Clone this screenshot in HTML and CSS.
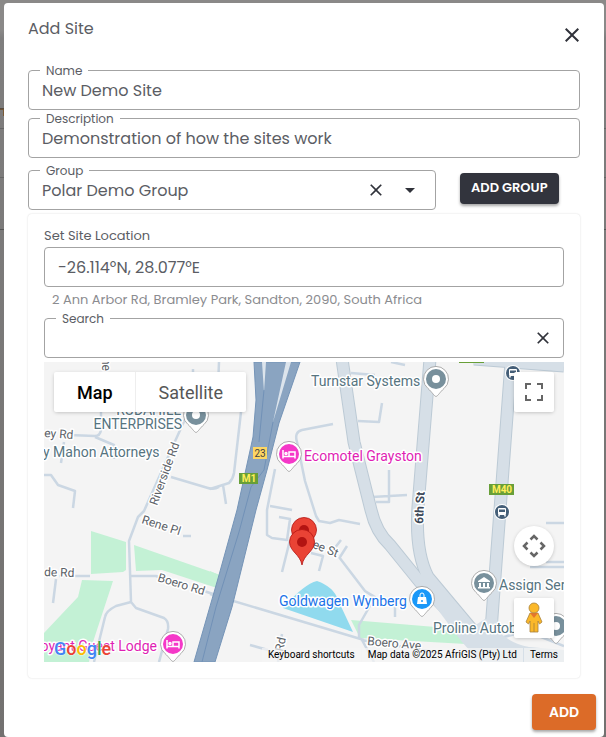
FILE: index.html
```html
<!DOCTYPE html>
<html lang="en">
<head>
<meta charset="utf-8">
<title>Add Site</title>
<link rel="stylesheet" href="styles.css">
</head>
<body>
<main class="dialog" role="dialog" aria-labelledby="dialog-title">
  <header class="dialog-header">
    <h1 class="dialog-title" id="dialog-title">Add Site</h1>
    <button class="icon-button close" type="button" aria-label="Close">
      <svg width="24" height="24" viewBox="0 0 24 24"><path d="M19 6.41 17.59 5 12 10.59 6.41 5 5 6.41 10.59 12 5 17.59 6.41 19 12 13.41 17.59 19 19 17.59 13.41 12z"/></svg>
    </button>
  </header>
  <form class="form">
    <div class="field">
      <label class="field-label" for="name">Name</label>
      <input class="field-input" id="name" type="text" value="New Demo Site">
    </div>
    <div class="field">
      <label class="field-label" for="description">Description</label>
      <input class="field-input" id="description" type="text" value="Demonstration of how the sites work">
    </div>
    <div class="group-row">
      <div class="field group-field">
        <label class="field-label" for="group">Group</label>
        <select class="field-input" id="group"><option>Polar Demo Group</option></select>
        <button class="icon-button" type="button" aria-label="Clear group">
          <svg width="20" height="20" viewBox="0 0 24 24"><path d="M19 6.41 17.59 5 12 10.59 6.41 5 5 6.41 10.59 12 5 17.59 6.41 19 12 13.41 17.59 19 19 17.59 13.41 12z"/></svg>
        </button>
        <svg class="arrow" width="24" height="24" viewBox="0 0 24 24" aria-hidden="true"><path d="m7 10 5 5 5-5z"/></svg>
      </div>
      <button class="button button-dark" type="button">ADD GROUP</button>
    </div>
    <section class="card">
      <label class="card-label" for="location">Set Site Location</label>
      <div class="field">
        <input class="field-input coordinates" id="location" type="text" value="-26.114°N, 28.077°E">
      </div>
      <p class="hint">2 Ann Arbor Rd, Bramley Park, Sandton, 2090, South Africa</p>
      <div class="field search-field">
        <label class="field-label" for="search">Search</label>
        <input class="field-input" id="search" type="text">
        <button class="icon-button" type="button" aria-label="Clear search">
          <svg width="20" height="20" viewBox="0 0 24 24"><path d="M19 6.41 17.59 5 12 10.59 6.41 5 5 6.41 10.59 12 5 17.59 6.41 19 12 13.41 17.59 19 19 17.59 13.41 12z"/></svg>
        </button>
      </div>
      <div class="map">
        <svg class="map-canvas" viewBox="0 0 520 300" preserveAspectRatio="xMidYMid slice" role="img" aria-label="Map of Bramley Park">
          <defs>
            <g id="pin">
              <path class="pin-edge" d="M0 17.500C-2 17-4 13-8 9.500A12.500 12.500 0 1 1 8 9.500C4 13 2 17 0 17.500z"/>
            </g>
            <g id="marker">
              <path d="M0 23C-2 12-12 10-12.500 0A12.500 12.500 0 0 1 12.500 0C12 10 2 12 0 23z" fill="#ea4335" stroke="#b31412" stroke-width=".8"/>
              <circle r="5" fill="#b31412"/>
            </g>
            <g id="bed" fill="none" stroke="#fff" stroke-width="1.500">
              <path d="M-6-4V4.500M-6 2.500H6M6 4.500V-2H0V2"/><circle cx="-3" cy="-.5" r="1"/>
            </g>
            <g id="bus">
              <circle r="8" fill="#fff"/><circle r="7" fill="#455f78"/>
              <rect x="-4" y="-4" width="8" height="7" rx="1" fill="#fff"/>
              <path d="M-3-2.500H3V0H-3z" fill="#455f78"/><path d="M-3 3v1.500M3 3v1.500" stroke="#fff" stroke-width="1.500"/>
            </g>
          </defs>
          <rect width="520" height="300" fill="#f4f4f4"/>
          <g fill="#c3f1d5">
            <path d="M47 169 82 180V208L79 210 47 212z"/>
            <path d="M90 183 176 213V227L118 208 92 209z"/>
            <path d="M38 218 69 219 49 280 45 300H0V271L16 254 34 235z"/>
            <path d="M166 209 175 213V226L166 222z"/>
            <path d="M307 258 416 267 422 282 316 276z"/>
          </g>
          <path d="M239 246Q260 222 273 219Q290 225 294 238L309 270z" fill="#90daee"/>
          <g class="street">
            <path d="M61 0V45"/><path d="M57 50V68Q56 74 51 74L25 73"/><path d="M51 75 70 83V97M20 80 17 101M0 113H7L14 123 31 129 29 146"/>
            <path d="M149 7V20M175 0 173 50M147 44 128 86 100 149 94 155 85 179 87 240 92 246 120 256Q125 259 124 267L115 300"/>
            <path d="M127 115 164 126Q170 128 175 125M87 240 72 244Q62 249 61 255L50 300"/>
            <path d="M15 214H46M12 217 9 241M87 214H112L122 218M160 229 172 233M139 174H147"/>
            <path d="M197 50 190 111Q189 117 185 121L166 127M179 123 182 142"/>
            <path d="M289 62 258 68Q250 70 253 80L261 119 272 154 275 159 286 161 295 158 316 162"/>
            <path d="M231 107 223 148V173L228 176 243 178 246 157 235 155M226 144 248 148 M246 178 238 210M267 191 279 194 275 209M295 195 321 229 330 235M321 229 331 235 315 263V277M290 187 297 178M296 195 303 184"/>
            <path d="M307 11 331 13M314 59 335 60 338 41M328 135 363 133M345 108V140H332"/>
            <path d="M166 232 320 278M206 283 224 288M238 272 234 300M318 278 330 300M317 278 390 290"/>
            <path d="M502 161H520M502 200H520M486 205H520M351 243V255M460 275 482 269 520 284M347 0 361 3"/>
          </g>
          <g class="road-edge"><path d="M430-3 520 4"/><path d="M298-3 310 80 327 148Q332 170 346 183L376 220 430 276 446 302"/><path d="M386-3 374 145Q371 190 384 215L430 270"/><path d="M467 0 456 148 447 268"/></g>
          <g class="road"><path d="M430-3 520 4"/><path d="M298-3 310 80 327 148Q332 170 346 183L376 220 430 276 446 302"/><path d="M386-3 374 145Q371 190 384 215L430 270"/><path d="M467 0 456 148 447 268"/></g>
          <path d="M378 213 390 220 430 264 441 257 453 256 455 270Q468 282 485 285L520 288V300H436L418 280 370 216z" fill="#d6dfe7"/>
          <path d="M210 0H256L235 61 223 108 212 148 193 225 188 245 171 300H150L175 213 193 148 209 75 212 38z" fill="#8aa4c1" stroke="#7594b7"/>
          <path d="M218 0H222L220 30zM242 0H247L229 60z" fill="#dce4ec"/>
          <path d="M220 28 215 80M229 60 220 108 207 125 195 170 172 245 158 300" fill="none" stroke="#7191b7"/>
          <path d="M415 0H440V1H415z" fill="#689f38"/>
          <g class="map-text">
            <text x="58" y="-4" transform="rotate(90 58 -4)" class="small">he</text>
            <text x="0" y="75" transform="rotate(4 0 75)" class="small">ey Rd</text>
            <text x="137" y="53" text-anchor="end" class="poi">RUDAHILL</text><text x="138" y="67" text-anchor="end" class="poi">ENTERPRISES</text>
            <text x="-1" y="95" class="poi">y Mahon Attorneys</text>
            <text x="113" y="144" transform="rotate(-70 113 144)" class="small">Riverside Rd</text>
            <text x="97" y="161" transform="rotate(18 97 161)" class="small">Rene Pl</text>
            <text x="113" y="219" transform="rotate(17 113 219)" class="small">Boero Rd</text>
            <text x="0" y="214" transform="rotate(2 0 214)" class="small">de Rd</text>
            <text x="264" y="184" transform="rotate(22 264 184)" class="small">ree St</text>
            <text x="239" y="290" transform="rotate(-78 239 290)" class="small">Rd</text>
            <text x="323" y="283" transform="rotate(5 323 283)" class="small">Boero Ave</text>
            <text x="379" y="162" transform="rotate(-87 379 162)" class="major">6th St</text>
            <text x="267" y="24" class="poi">Turnstar Systems</text>
            <text x="260" y="99" class="hotel">Ecomotel Grayston</text>
            <text x="235" y="244" class="shop">Goldwagen Wynberg</text>
            <text x="455" y="228" class="poi">Assign Ser</text>
            <text x="389" y="271" class="poi">Proline Autob</text>
            <text x="113" y="289" text-anchor="end" class="hotel">oyant Guest Lodge</text>
          </g>
          <g class="shields">
            <rect x="209" y="85" width="14" height="12" fill="#fdd663"/><text x="216" y="95" text-anchor="middle" fill="#424242">23</text>
            <rect x="195" y="111" width="19" height="11" fill="#689f38"/><text x="205" y="120" text-anchor="middle" class="shield-bold">M1</text>
            <rect x="445" y="122" width="25" height="11" fill="#689f38"/><text x="458" y="131" text-anchor="middle" class="shield-bold">M40</text>
          </g>
          <use href="#bus" x="469" y="11"/><use href="#bus" x="458" y="150"/>
          <g transform="translate(392 17)"><use href="#pin"/><circle r="10" fill="#78909c"/><circle r="4" fill="#fff"/></g>
          <g transform="translate(152 53)"><use href="#pin"/><circle r="10" fill="#78909c"/><circle r="4" fill="#fff"/></g>
          <g transform="translate(512 264)"><use href="#pin"/><circle r="10" fill="#78909c"/><circle r="4" fill="#fff"/></g>
          <g transform="translate(245 92)"><use href="#pin"/><circle r="10" fill="#f538c8"/><use href="#bed"/></g>
          <g transform="translate(129 282)"><use href="#pin"/><circle r="10" fill="#f538c8"/><use href="#bed"/></g>
          <g transform="translate(378 237)"><use href="#pin"/><circle r="10" fill="#1a98f8"/><path d="M-4-2H4L5 5H-5z" fill="#fff"/><path d="M-2-2v-2a2 2 0 0 1 4 0v2" fill="none" stroke="#fff"/><circle cy="2" r="1" fill="#1a98f8"/></g>
          <g transform="translate(440 221)"><use href="#pin"/><circle r="10" fill="#78909c"/><path d="M-6-2 0-6 6-2V-1H-6zM-5 0h2v4h-2zM-1 0H1V4H-1zM3 0H5V4H3zM-6 4H6V5.500H-6z" fill="#fff"/></g>
          <use href="#marker" x="260" y="168"/><use href="#marker" x="258" y="180"/>
        </svg>
        <div class="map-types"><button class="map-type selected" type="button">Map</button><button class="map-type" type="button">Satellite</button></div>
        <div class="map-tools">
          <button class="map-tool" type="button" aria-label="Toggle fullscreen"><svg width="18" height="18" viewBox="0 0 18 18"><path d="M0 0H6V2H2V6H0zM12 0H18V6H16V2H12zM0 12H2V16H6V18H0zM16 12H18V18H12V16H16z"/></svg></button>
          <button class="map-tool round" type="button" aria-label="Map camera controls"><svg width="24" height="24" viewBox="0 0 24 24" fill="none" stroke="#666" stroke-width="2.500"><path d="M8.500 5.500 12 2 15.500 5.500M8.500 18.500 12 22 15.500 18.500M5.500 8.500 2 12 5.500 15.500M18.500 8.500 22 12 18.500 15.500"/></svg></button>
          <button class="map-tool" type="button" aria-label="Street View"><svg width="20" height="32" viewBox="0 0 20 32" stroke="#a8813c" stroke-width=".8"><path d="M6 11H14L18 20 15.500 22 14 19V30H6V19L4.500 22 2 20z" fill="#fbb829"/><path d="M6 11H14L10 16z" fill="#e5762d" stroke="none"/><path d="M10 21V30"/><circle cx="10" cy="6" r="5" fill="#fbb829"/></svg></button>
        </div>
        <div class="map-footer">
          <a class="google" href="#" aria-label="Google"><span class="g-blue">G</span><span class="g-red">o</span><span class="g-yellow">o</span><span class="g-blue">g</span><span class="g-green">l</span><span class="g-red">e</span></a>
          <div class="credits"><button type="button">Keyboard shortcuts</button><span>Map data ©2025 AfriGIS (Pty) Ltd</span><a href="#">Terms</a></div>
        </div>
      </div>
    </section>
    <footer class="actions"><button class="button button-orange" type="submit">ADD</button></footer>
  </form>
</main>
</body>
</html>
```
FILE: styles.css
```css
* { box-sizing: border-box; }
body {
  margin: 0;
  padding: 3px 2px 0 4px;
  min-height: 100vh;
  background:
    linear-gradient(#4d4742, #7a5a35) 0 108px / 4px 2px no-repeat,
    linear-gradient(#7a5a35, #7a5a35) 3px 110px / 1px 6px no-repeat,
    linear-gradient(#666, #666) 0 128px / 100% 1px no-repeat,
    linear-gradient(#666, #666) 0 177px / 100% 1px no-repeat,
    linear-gradient(#555, #555) 0 229px / 100% 1px no-repeat,
    linear-gradient(#8a8988 0, #8a8988 30px, #7f7e7e 38px, #737170 100%);
  font-family: Poppins, Inter, sans-serif;
  color: #5b5d64;
}
button, input, select { font: inherit; color: inherit; }
button { border: 0; padding: 0; background: none; cursor: pointer; }
.dialog { min-height: calc(100vh - 3px); background: #fff; border-radius: 4px; }
.dialog-header { display: flex; justify-content: space-between; padding: 14px 20px 0 24px; height: 67px; }
.dialog-title { margin: 0; font-size: 16px; line-height: 24px; font-weight: 400; }
.icon-button { display: flex; align-items: center; justify-content: center; width: 24px; height: 24px; fill: #30323a; }
.close { margin-top: 6px; }
.form { display: flex; flex-direction: column; }
.field { position: relative; display: flex; align-items: center; height: 40px; margin: 0 24px 8px; border: 1px solid #a3a3a3; border-radius: 4px; }
.field-label { position: absolute; top: -8px; left: 11px; padding: 0 6px; background: #fff; font-size: 12px; line-height: 16px; }
.field-input { flex: 1; min-width: 0; height: 38px; padding: 0 13px; border: 0; outline: 0; background: none; appearance: none; font-size: 16px; }
.group-row { display: flex; align-items: center; gap: 24px; margin: 4px 24px; }
.group-row .field { margin: 0; }
.group-field { flex: 0 1 408px; padding-right: 13px; }
.arrow { margin-left: 10px; fill: #30323a; pointer-events: none; }
.button { border-radius: 4px; color: #fff; font-weight: 600; font-size: 13px; box-shadow: 0 2px 3px rgba(0, 0, 0, .35); }
.button-dark { height: 31px; padding: 0 11px; margin-bottom: 4px; background: #32343d; }
.button-orange { min-width: 64px; height: 36px; padding: 0 16px; background: #dc6b28; font-size: 14px; }
.card { margin: 0 24px; padding: 12px 16px 16px; border-radius: 4px; box-shadow: 0 0 2px rgba(0, 0, 0, .16); }
.card .field { margin: 0; }
.card-label { display: block; font-size: 13px; line-height: 20px; margin-bottom: 1px; }
.hint { margin: 3px 8px 8px; font-size: 13px; line-height: 20px; color: #8b8c90; }
.search-field { padding-right: 8px; }
.map { position: relative; height: 300px; margin-top: 4px; overflow: hidden; font-family: Roboto, sans-serif; }
.map-canvas { display: block; width: 100%; height: 100%; }
.street { fill: none; stroke: #cbd7e3; stroke-width: 2.5; stroke-linejoin: round; }
.road-edge { fill: none; stroke: #bccad5; stroke-width: 13; }
.road { fill: none; stroke: #d6dfe7; stroke-width: 11; }
.pin-edge { fill: #fff; stroke: #999; stroke-width: .8; }
.map-text text { paint-order: stroke; stroke: #fff; stroke-width: 3px; stroke-linejoin: round; font-size: 14px; }
.map-text .small { font-size: 12px; fill: #5c6268; }
.map-text .poi { fill: #56747f; }
.map-text .hotel { fill: #e01eb4; }
.map-text .shop { fill: #1a73e8; }
.map-text .major { font-size: 12px; font-weight: 700; fill: #3c4858; }
.shields { font-size: 10px; }
.shield-bold { font-weight: 700; fill: #ffee58; }
.map-types { position: absolute; top: 10px; left: 10px; display: flex; height: 40px; background: #fff; border-radius: 2px; box-shadow: 0 1px 4px -1px rgba(0, 0, 0, .3); }
.map-type { padding: 0 23px; font-size: 18px; color: #565656; }
.selected { padding-right: 22px; color: #000; font-weight: 500; border-right: 1px solid #eee; }
.map-tools { position: absolute; right: 10px; top: 10px; bottom: 24px; display: flex; flex-direction: column; gap: 32px; }
.map-tool { display: flex; align-items: center; justify-content: center; width: 40px; height: 40px; background: #fff; border-radius: 2px; box-shadow: 0 1px 4px -1px rgba(0, 0, 0, .3); fill: #666; }
.round { margin-top: auto; border-radius: 50%; }
.map-footer { position: absolute; inset: auto 0 0; display: flex; align-items: flex-end; justify-content: space-between; }
.google { margin: 0 0 2px 10px; font: 500 18px/22px Roboto, sans-serif; text-decoration: none; text-shadow: 0 0 2px #fff, 0 0 1px #fff; }
.g-blue { color: #4285f4; }
.g-red { color: #ea4335; }
.g-yellow { color: #fbbc04; }
.g-green { color: #34a853; }
.credits { display: flex; gap: 1px; font-size: 10px; line-height: 14px; color: #000; }
.credits > * { padding: 0 6px; background: rgba(245, 245, 245, .7); color: #000; text-decoration: none; }
.actions { display: flex; justify-content: flex-end; padding: 16px 8px 7px; }
```
